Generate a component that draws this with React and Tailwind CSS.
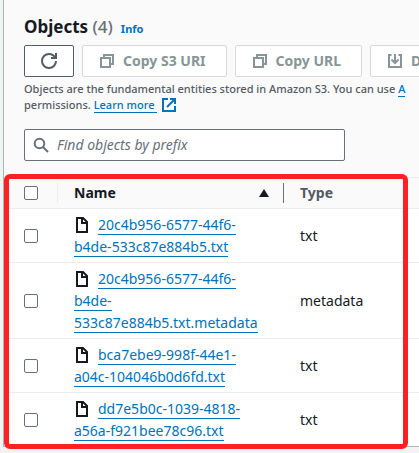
import React from "react";

const objects = [
  { lines: ["20c4b956-6577-44f6-", "b4de-533c87e884b5.txt"], type: "txt" },
  { lines: ["20c4b956-6577-44f6-", "b4de-", "533c87e884b5.txt.metadata"], type: "metadata" },
  { lines: ["bca7ebe9-998f-44e1-", "a04c-104046b0d6fd.txt"], type: "txt" },
  { lines: ["dd7e5b0c-1039-4818-", "a56a-f921bee78c96.txt"], type: "txt" },
];

const icon = {
  viewBox: "0 0 16 16",
  fill: "none",
  stroke: "currentColor",
  strokeWidth: 2,
  "aria-hidden": true,
};

function RefreshIcon() {
  return (
    <svg {...icon} className="size-4">
      <path d="M10 5h5V0" />
      <path d="M15 8a6.96 6.96 0 0 1-7 7 6.96 6.96 0 0 1-7-7 6.96 6.96 0 0 1 7-7 7.02 7.02 0 0 1 6.1 3.6" />
    </svg>
  );
}

function CopyIcon() {
  return (
    <svg {...icon} className="size-4 shrink-0">
      <path d="M2 5h9v9H2z" />
      <path d="M5 5V2h9v9h-3" />
    </svg>
  );
}

function DownloadIcon() {
  return (
    <svg {...icon} className="size-4 shrink-0">
      <path d="M4.5 2H2v12h12V2h-2.5" />
      <path d="M8 1v9M4.5 6.5 8 10l3.5-3.5" />
    </svg>
  );
}

function ExternalIcon() {
  return (
    <svg {...icon} className="ml-1 inline-block size-4 align-top">
      <path d="M7 2H2v12h12V9" />
      <path d="M9 2h5v5M6 10l8-8" />
    </svg>
  );
}

function FileIcon() {
  return (
    <svg {...icon} className="mr-2 inline-block size-4 align-[-3px] text-[#16191f]">
      <path d="M3 1h6l4 4v10H3z" />
      <path d="M8 1v5h5" />
    </svg>
  );
}

function SearchIcon() {
  return (
    <svg {...icon} className="size-4 shrink-0 text-[#687078]">
      <circle cx="6.5" cy="6.5" r="4.8" />
      <path d="m10 10 5 5" />
    </svg>
  );
}

function DisabledButton({ children }) {
  return (
    <button
      type="button"
      disabled
      className="flex h-8 shrink-0 items-center gap-2 rounded-[2px] border border-[#d5dbdb] bg-white pr-5 pl-4 text-sm font-bold whitespace-nowrap text-[#879596]"
    >
      {children}
    </button>
  );
}

function Checkbox({ label }) {
  return (
    <input
      type="checkbox"
      aria-label={label}
      className="block size-3.5 appearance-none rounded-[2px] border border-[#687078] bg-white checked:bg-[#0073bb]"
    />
  );
}

export default function App() {
  return (
    <div className="min-h-screen overflow-hidden bg-[#f2f3f3] pl-[3px] font-['Noto_Sans','Open_Sans',sans-serif] text-sm text-[#16191f]">
      <section className="relative border-b border-l border-[#aab7b8] bg-white">
        <header className="bg-[#fafafa] py-4 pl-5">
          <div className="flex h-[29px] items-start gap-2">
            <h2 className="text-[17px] leading-[22px] font-bold">
              Objects <span className="font-medium text-[#687078]">(4)</span>
            </h2>
            <a href="#info" className="pt-[2px] text-[11px] leading-[22px] font-bold text-[#0073bb]">Info</a>
          </div>
          <div className="flex gap-2 overflow-hidden">
            <button
              type="button"
              aria-label="Refresh"
              className="flex h-8 w-[50px] shrink-0 items-center justify-center rounded-[2px] border border-[#545b64] bg-white text-[#545b64]"
            >
              <RefreshIcon />
            </button>
            <DisabledButton><CopyIcon />Copy S3 URI</DisabledButton>
            <DisabledButton><CopyIcon />Copy URL</DisabledButton>
            <DisabledButton><DownloadIcon />Download</DisabledButton>
          </div>
          <p className="mt-1 text-[11px] leading-4 font-medium whitespace-nowrap text-[#545b64]">
            Objects are the fundamental entities stored in Amazon S3. You can use{" "}
            <a href="#inventory" className="border-b border-[#0073bb] text-[#0073bb]">A</a>
            <br />
            permissions.{" "}
            <a href="#learn" className="text-[#0073bb]">
              <span className="border-b border-[#0073bb]">Learn more </span>
              <ExternalIcon />
            </a>
          </p>
          <label className="mt-4 mr-[74px] flex h-8 items-center gap-2 rounded-[2px] border border-[#687078] bg-white px-2">
            <SearchIcon />
            <input
              type="text"
              aria-label="Find objects by prefix"
              placeholder="Find objects by prefix"
              className="min-w-0 flex-1 bg-transparent outline-none placeholder:text-[#687078] placeholder:italic"
            />
          </label>
        </header>

        <table className="w-full table-fixed border-collapse text-left">
          <thead>
            <tr className="h-[31px] border-y border-[#eaeded] bg-[#fafafa]">
              <th className="w-[54px] p-0">
                <div className="flex h-5 items-center border-r border-[#eaeded] pl-5">
                  <Checkbox label="Select all objects" />
                </div>
              </th>
              <th className="w-[226px] p-0">
                <div className="flex h-5 items-center justify-between border-r border-[#687078] pr-[14px] pl-4">
                  Name
                  <svg viewBox="0 0 10 8" className="h-2 w-2.5" aria-hidden="true">
                    <path d="M5 0 10 8H0z" fill="#16191f" />
                  </svg>
                </div>
              </th>
              <th className="p-0 pl-4 text-[#545b64]">Type</th>
            </tr>
          </thead>
          <tbody>
            {objects.map((object, index) => (
              <tr key={index} className="border-b border-[#eaeded] last:border-b-0">
                <td className="p-0 pl-5">
                  <Checkbox label={"Select " + object.lines.join("")} />
                </td>
                <td className="py-1 pt-[5px] pl-4 leading-[22px] whitespace-nowrap">
                  <FileIcon />
                  <a href="#object" className="text-[#0073bb]">
                    {object.lines.map((line, i) => (
                      <React.Fragment key={i}>
                        {i > 0 && <br />}
                        <span className="border-b border-[#0073bb]">{line}</span>
                      </React.Fragment>
                    ))}
                  </a>
                </td>
                <td className="p-0 pl-4">{object.type}</td>
              </tr>
            ))}
          </tbody>
        </table>
        <div className="pointer-events-none absolute top-[174px] right-[11px] -bottom-[3px] left-0 rounded-md border-5 border-[#ff2023]" />
      </section>
    </div>
  );
}
